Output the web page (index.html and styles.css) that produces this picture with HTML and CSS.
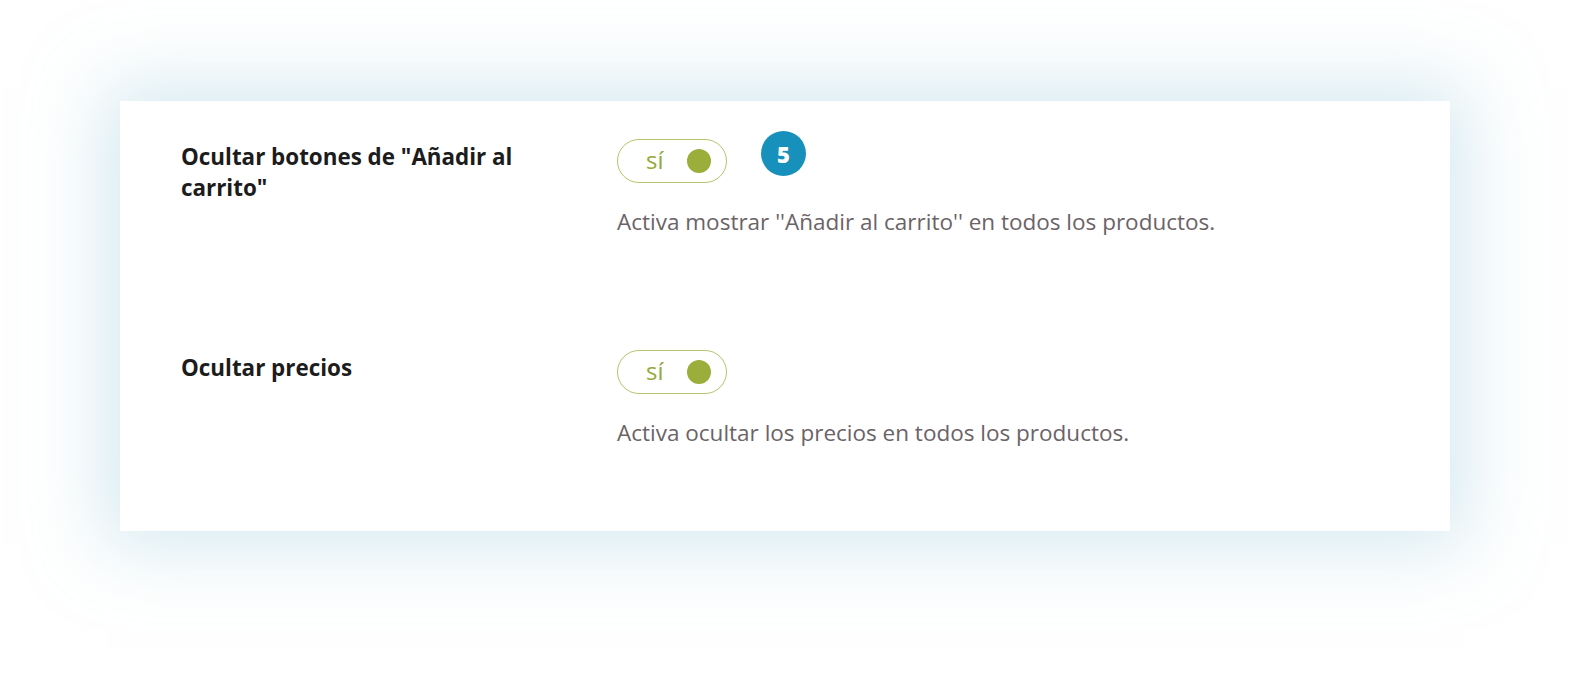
FILE: index.html
```html
<!DOCTYPE html>
<html lang="es">
<head>
  <meta charset="UTF-8">
  <title>Ajustes de catálogo</title>
  <link rel="stylesheet" href="styles.css">
</head>
<body>
  <div class="card">
    <div class="setting">
      <div class="label">Ocultar botones de "Añadir al carrito"</div>
      <div class="control">
        <div class="control-top">
          <div class="toggle"><span class="toggle-text">sí</span><span class="knob"></span></div>
          <div class="step">5</div>
        </div>
        <p class="desc">Activa mostrar ''Añadir al carrito'' en todos los productos.</p>
      </div>
    </div>
    <div class="setting">
      <div class="label">Ocultar precios</div>
      <div class="control">
        <div class="control-top">
          <div class="toggle"><span class="toggle-text">sí</span><span class="knob"></span></div>
        </div>
        <p class="desc">Activa ocultar los precios en todos los productos.</p>
      </div>
    </div>
  </div>
</body>
</html>
```

FILE: styles.css
```css
html, body {
  height: 100%;
}
body {
  margin: 0;
  background: #fff;
  font-family: 'Open Sans', 'Noto Sans', sans-serif;
  padding-top: 101px;
  box-sizing: border-box;
}
.card {
  margin: 0 144px 0 120px;
  height: 430px;
  box-sizing: border-box;
  padding: 38px 0 0 61px;
  background: #fff;
  box-shadow: 0 0 70px 14px rgba(170, 212, 226, 0.5);
}
.setting {
  display: grid;
  grid-template-columns: 436px 1fr;
  margin-bottom: 113px;
}
.setting:last-child {
  margin-bottom: 0;
}
.label {
  font-size: 22.4px;
  font-weight: 700;
  line-height: 31px;
  color: #1c1c1c;
  width: 360px;
  padding-top: 2px;
}
.control-top {
  display: flex;
  align-items: flex-start;
  height: 44px;
}
.toggle {
  width: 110px;
  height: 44px;
  box-sizing: border-box;
  border: 1.5px solid #b4c66a;
  border-radius: 22px;
  display: flex;
  align-items: center;
  padding: 0 15px 0 28px;
  justify-content: space-between;
}
.toggle-text {
  color: #93a93a;
  font-size: 24px;
  line-height: 1;
  margin-top: -3px;
}
.knob {
  width: 24px;
  height: 24px;
  border-radius: 50%;
  background: #9bae3c;
}
.step {
  width: 45px;
  height: 45px;
  border-radius: 50%;
  background: #1790bb;
  color: #fff;
  font-weight: 800;
  font-size: 22px;
  display: flex;
  align-items: center;
  justify-content: center;
  margin: -8px 0 0 34px;
}
.desc {
  margin: 24px 0 0;
  font-size: 22.5px;
  line-height: 30px;
  color: #6b6367;
}
```
